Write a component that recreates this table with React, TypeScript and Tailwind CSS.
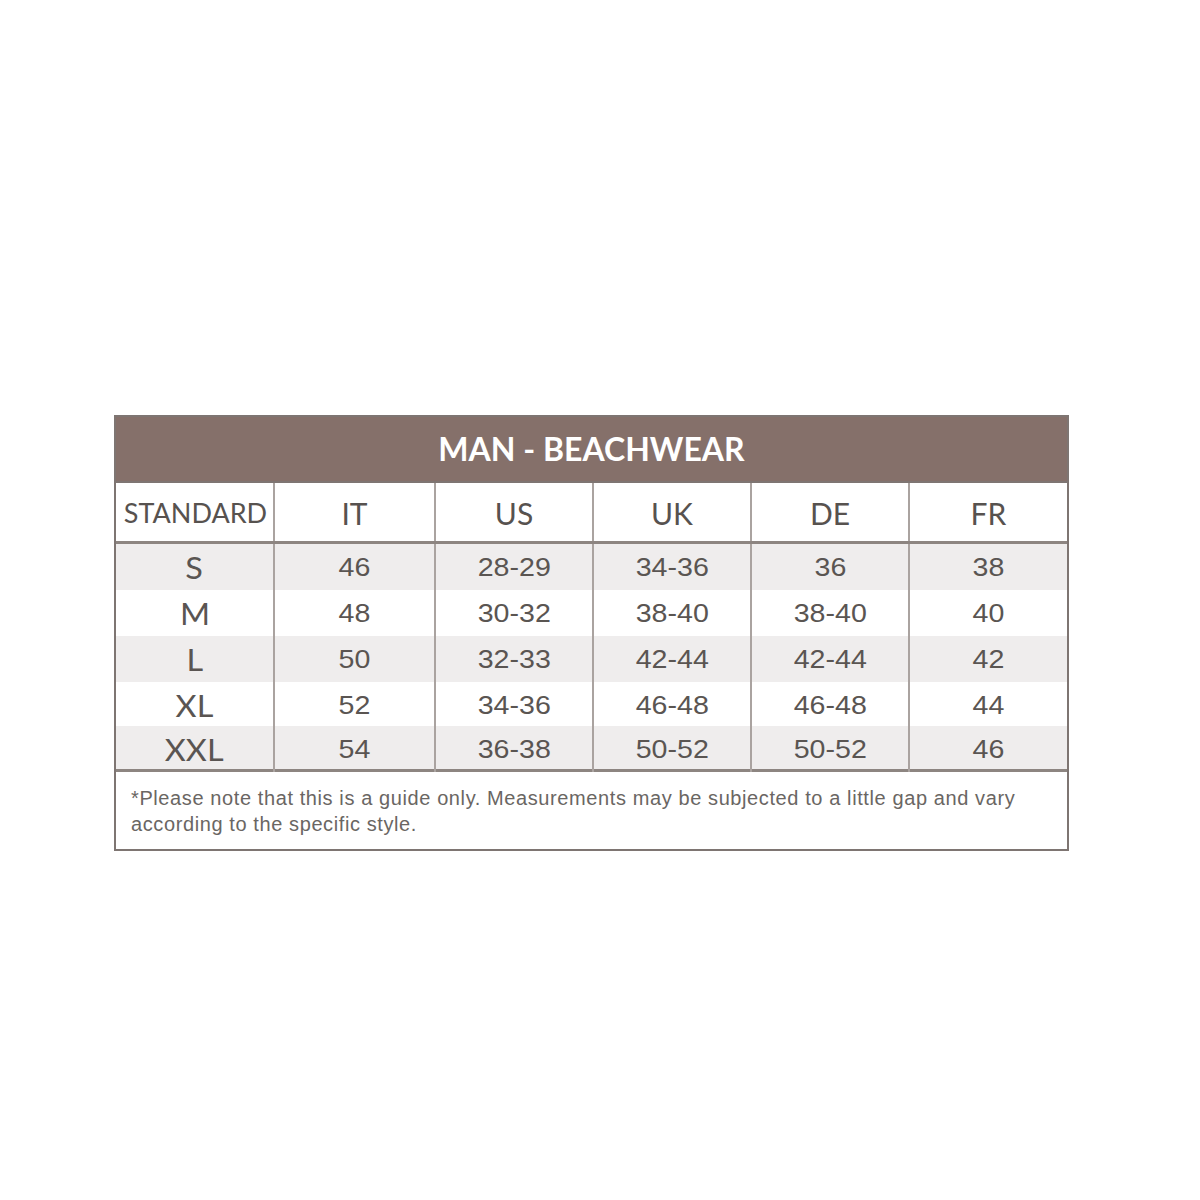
const columns = ['IT', 'US', 'UK', 'DE', 'FR'];

const rows = [
  { size: 'S', values: ['46', '28-29', '34-36', '36', '38'], h: 'h-[46px]' },
  { size: 'M', values: ['48', '30-32', '38-40', '38-40', '40'], h: 'h-[46px]' },
  { size: 'L', values: ['50', '32-33', '42-44', '42-44', '42'], h: 'h-[46px]' },
  { size: 'XL', values: ['52', '34-36', '46-48', '46-48', '44'], h: 'h-[44px]' },
  { size: 'XXL', values: ['54', '36-38', '50-52', '50-52', '46'], h: 'h-[43px]' },
];

const grid = 'grid grid-cols-[157px_161px_158px_158px_158px_1fr]';

const App = () => {
  return (
    <div className="w-[1200px] h-[1200px] bg-white pt-[415px] pl-[114px]">
      <div className="w-[955px] border-2 border-[#7e7572] bg-white">
        {/* title band */}
        <div className="h-[66px] bg-[#85706a] flex items-center justify-center border-b-2 border-[#7e7572]">
          <span className="font-['Lato',sans-serif] font-bold text-[32px] text-white">
            MAN - BEACHWEAR
          </span>
        </div>

        {/* header row */}
        <div className={`${grid} h-[61px] border-b-[3px] border-[#8d8581] text-[#57524f]`}>
          <div className="flex items-center justify-center font-['Lato',sans-serif] text-[27px] pt-[2px] pl-[2px]">STANDARD</div>
          {columns.map((c) => (
            <div key={c} className="flex items-center justify-center border-l-2 border-[#aaa3a0] font-['Lato',sans-serif] text-[30px] pt-[2px]">
              {c}
            </div>
          ))}
        </div>

        {/* size rows */}
        {rows.map((r, i) => (
          <div key={r.size} className={`${grid} ${r.h} ${i % 2 === 0 ? 'bg-[#efeded]' : 'bg-white'} text-[#5a5552]`}>
            <div className="flex items-center justify-center font-['Lato',sans-serif] text-[30px] pt-[1px]">
              <span className="inline-block scale-x-[1.08]">{r.size}</span>
            </div>
            {r.values.map((v, j) => (
              <div key={j} className="flex items-center justify-center border-l-2 border-[#aaa3a0] font-['Liberation_Sans',Arial,sans-serif] text-[26px]">
                <span className="inline-block scale-x-[1.1]">{v}</span>
              </div>
            ))}
          </div>
        ))}

        {/* note */}
        <div className="border-t-[3px] border-[#8d8581] h-[80px] pl-[15px] pt-[13px] pr-[30px] font-['Liberation_Sans',Arial,sans-serif] text-[20px] tracking-[0.6px] leading-[26px] text-[#6a6663]">
          *Please note that this is a guide only. Measurements may be subjected to a little gap and vary according to the specific style.
        </div>
      </div>
    </div>
  );
};

export default App;
